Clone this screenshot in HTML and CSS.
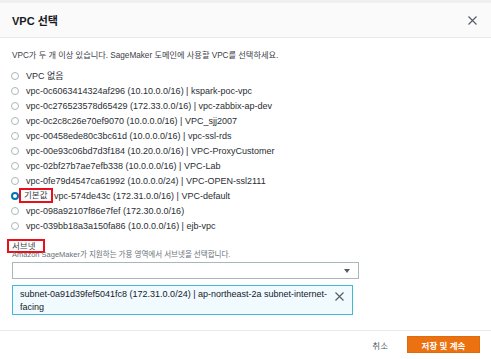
FILE: index.html
```html
<!DOCTYPE html>
<html lang="ko">
<head>
  <meta charset="UTF-8" />
  <title>VPC 선택</title>
  <link rel="stylesheet" href="styles.css">
</head>
<body>
  <div class="topbar"></div>

  <div class="modal-header">
    <h2>VPC 선택</h2>
    <svg class="close" width="9" height="9" viewBox="0 0 9 9">
      <path d="M0.5 0.5 L8.5 8.5 M8.5 0.5 L0.5 8.5" stroke="#545b64" stroke-width="1.1" fill="none"/>
    </svg>
  </div>

  <div class="modal-body">
    <p class="desc">VPC가 두 개 이상 있습니다. SageMaker 도메인에 사용할 VPC를 선택하세요.</p>

    <div class="radio-list">
      <label class="radio"><span class="dot"></span>VPC 없음</label>
      <label class="radio"><span class="dot"></span>vpc-0c6063414324af296 (10.10.0.0/16) | kspark-poc-vpc</label>
      <label class="radio"><span class="dot"></span>vpc-0c276523578d65429 (172.33.0.0/16) | vpc-zabbix-ap-dev</label>
      <label class="radio"><span class="dot"></span>vpc-0c2c8c26e70ef9070 (10.0.0.0/16) | VPC_sjj2007</label>
      <label class="radio"><span class="dot"></span>vpc-00458ede80c3bc61d (10.0.0.0/16) | vpc-ssl-rds</label>
      <label class="radio"><span class="dot"></span>vpc-00e93c06bd7d3f184 (10.20.0.0/16) | VPC-ProxyCustomer</label>
      <label class="radio"><span class="dot"></span>vpc-02bf27b7ae7efb338 (10.0.0.0/16) | VPC-Lab</label>
      <label class="radio"><span class="dot"></span>vpc-0fe79d4547ca61992 (10.0.0.0/24) | VPC-OPEN-ssl2111</label>
      <label class="radio selected"><span class="dot"></span><span class="mark">기본값</span>vpc-574de43c (172.31.0.0/16) | VPC-default</label>
      <label class="radio"><span class="dot"></span>vpc-098a92107f86e7fef (172.30.0.0/16)</label>
      <label class="radio"><span class="dot"></span>vpc-039bb18a3a150fa86 (10.0.0.0/16) | ejb-vpc</label>
    </div>

    <div class="field-label"><span>서브넷</span></div>
    <p class="help">Amazon SageMaker가 지원하는 가용 영역에서 서브넷을 선택합니다.</p>

    <div class="select">
      <span class="arrow"></span>
    </div>

    <div class="token">
      <span class="token-text">subnet-0a91d39fef5041fc8 (172.31.0.0/24) | ap-northeast-2a subnet-internet-facing</span>
      <svg class="token-x" width="9" height="9" viewBox="0 0 9 9">
        <path d="M0.5 0.5 L8.5 8.5 M8.5 0.5 L0.5 8.5" stroke="#545b64" stroke-width="1.1" fill="none"/>
      </svg>
    </div>
  </div>

  <div class="modal-footer">
    <button class="btn-cancel">취소</button>
    <button class="btn-primary">저장 및 계속</button>
  </div>
</body>
</html>
```

FILE: styles.css
```css
* {
  box-sizing: border-box;
  margin: 0;
  padding: 0;
}

body {
  font-family: "Liberation Sans", "Noto Sans CJK KR", sans-serif;
  color: #16191f;
  background: #ffffff;
  width: 491px;
}

.topbar {
  height: 3px;
  background: #eef0f0;
}

.modal-header {
  height: 35px;
  background: #fafafa;
  border-bottom: 1px solid #e6e9e9;
  display: flex;
  align-items: center;
  justify-content: space-between;
  padding: 0 14px 0 12px;
}

.modal-header h2 {
  font-size: 11px;
  font-weight: bold;
  color: #16191f;
}

.modal-body {
  padding: 0 12px;
}

.desc {
  margin-top: 12px;
  font-size: 8.2px;
  line-height: 12px;
  color: #3b4047;
}

.radio-list {
  margin-top: 6px;
}

.radio {
  display: flex;
  align-items: center;
  height: 15px;
  font-size: 9px;
  color: #2a2e33;
  white-space: nowrap;
}

.radio .dot {
  width: 8px;
  height: 8px;
  border: 1px solid #aab7b8;
  border-radius: 50%;
  margin: 0 7px 0 -1px;
  flex: none;
}

.radio.selected .dot {
  border: 2.5px solid #0073bb;
  margin-right: 0;
}

.mark {
  flex: none;
  width: 34px;
  height: 15px;
  border: 2px solid #e8101a;
  background: #ffffff;
  font-size: 8.5px;
  line-height: 11px;
  padding-left: 3px;
  margin-right: 1px;
  color: #3b4047;
}

.field-label {
  margin-top: 2px;
  height: 14px;
}

.field-label span {
  display: inline-block;
  height: 14px;
  margin-left: -5px;
  padding: 0 8px 0 3px;
  border: 2px solid #e8101a;
  font-size: 8.5px;
  line-height: 10px;
  color: #3b4047;
}

.help {
  margin-top: 1px;
  font-size: 7.5px;
  line-height: 10px;
  color: #687078;
}

.select {
  position: relative;
  margin-top: 2px;
  width: 347px;
  height: 17px;
  border: 1px solid #aab7b8;
  background: #ffffff;
}

.select .arrow {
  position: absolute;
  right: 8px;
  top: 6px;
  border-left: 3.5px solid transparent;
  border-right: 3.5px solid transparent;
  border-top: 4px solid #545b64;
}

.token {
  margin-top: 6px;
  width: 341px;
  height: 30px;
  border: 1px solid #44b9d6;
  background: #f1faff;
  display: flex;
  align-items: flex-start;
  justify-content: space-between;
  padding: 2px 8px 0 7px;
}

.token-text {
  width: 312px;
  font-size: 9px;
  line-height: 13px;
  color: #16191f;
}

.token-x {
  margin-top: 4px;
}

.modal-footer {
  margin-top: 15px;
  border-top: 1px solid #eaeded;
  display: flex;
  justify-content: flex-end;
  align-items: center;
  padding: 5px 11px 0 0;
}

.btn-cancel {
  background: none;
  border: none;
  font-family: inherit;
  font-size: 8.5px;
  color: #545b64;
  padding: 0 19px;
  height: 17px;
}

.btn-primary {
  width: 73px;
  height: 17px;
  background: #ec7211;
  border: 1px solid #dd6b10;
  color: #ffffff;
  font-family: inherit;
  font-weight: bold;
  font-size: 8.5px;
}
```
